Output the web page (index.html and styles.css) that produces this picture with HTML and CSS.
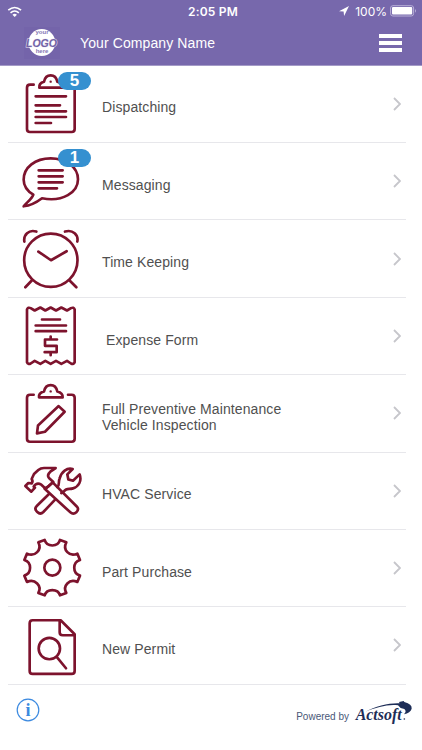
FILE: index.html
```html
<!DOCTYPE html>
<html lang="en">
<head>
<meta charset="utf-8">
<title>Your Company Name</title>
<link rel="stylesheet" href="styles.css">
</head>
<body>
<header class="header">
  <div class="status">
    <svg class="wifi" viewBox="20 16 50 38"><g fill="none" stroke="#fff" stroke-width="5"><path d="M24 31Q44 14 64 31"/><path d="M31 39Q44 28 57 39"/></g><path d="M37 45Q44 39 51 45L44 52Z" fill="#fff"/></svg>
    <span class="time">2:05 PM</span>
    <div class="power">
      <svg class="arrow" viewBox="0 0 10 10"><path d="M10 0L0 5.3L4.6 5.5L5.1 10Z" fill="#fff"/></svg>
      <span class="percent">100%</span>
      <svg class="battery" viewBox="0 0 27 12"><rect x=".6" y=".7" width="23" height="10.3" rx="2.3" fill="none" stroke="#b9b0d8"/><rect x="2" y="2.1" width="20.2" height="7.5" rx="1" fill="#fff"/><path d="M25 4Q27 5.800 25 7.700Z" fill="#b9b0d8"/></svg>
    </div>
  </div>
  <div class="bar">
    <svg class="logo" viewBox="0 0 36 32"><rect width="36" height="32" fill="#7464aa"/><circle cx="17.800" cy="15.500" r="13.400" fill="#fff"/><g text-anchor="middle"><text class="logo-small" x="18" y="7.200">your</text><text class="logo-big" x="17.500" y="19.500" textLength="31" lengthAdjust="spacingAndGlyphs">LOGO</text><text class="logo-small" x="18" y="26.300">here</text></g></svg>
    <h1 class="company">Your Company Name</h1>
    <div class="menu"><i></i><i></i><i></i></div>
  </div>
</header>
<main class="list">
  <div class="row">
    <svg class="icon" viewBox="24 3.9 252 232"><path d="M101 63H90Q81 63 81 72V196Q81 205 90 205H215Q224 205 224 196V72Q224 63 215 63H205"/><path d="M118 72Q116 58 132 54Q136 35 152 35Q168 35 172 54Q188 58 188 72Z"/><circle class="dot" cx="152" cy="54" r="3.5"/><path d="M107 98H198M107 125H180M107 143H198M107 160H198M107 178H153"/></svg>
    <span class="badge">5</span><span class="label">Dispatching</span>
    <svg class="chevron" viewBox="0 0 8 14"><path d="M1 1L7 7L1 13"/></svg>
  </div>
  <div class="row">
    <svg class="icon" viewBox="24 2.1 252 232"><path d="M100 160C82 149 71 133 71 115C71 78 106 51 152 51C198 51 234 78 234 114C234 153 189 183 126 171C109 184 91 193 71 195C82 182 97 171 100 160Z"/><path d="M116 87H188M116 105H188M116 123H188M116 141H171"/></svg>
    <span class="badge">1</span><span class="label">Messaging</span>
    <svg class="chevron" viewBox="0 0 8 14"><path d="M1 1L7 7L1 13"/></svg>
  </div>
  <div class="row">
    <svg class="icon" viewBox="24 .3 252 232"><circle cx="152.500" cy="121" r="80"/><path d="M115 95L153 121L200 94M73 65C70 45 86 28 109 35M232 65C236 45 219 28 195 35M96 181L76 202M208 181L229 202"/></svg>
    <span class="label">Time Keeping</span>
    <svg class="chevron" viewBox="0 0 8 14"><path d="M1 1L7 7L1 13"/></svg>
  </div>
  <div class="row">
    <svg class="icon" viewBox="24 -1.5 252 232"><path d="M81 36Q84 28 92 32L104 39L121 30L136 39L152 30L168 39L184 30L201 39L213 32Q221 28 224 36V194Q221 202 213 198L201 190L184 199L168 190L152 199L136 190L121 199L104 190L92 198Q84 202 81 194Z"/><path d="M126 66H180M107 84H198M107 101H198M171 126H135V145H170V164H134M152 117V126M152 164V173"/></svg>
    <span class="label label-inset">Expense Form</span>
    <svg class="chevron" viewBox="0 0 8 14"><path d="M1 1L7 7L1 13"/></svg>
  </div>
  <div class="row">
    <svg class="icon" viewBox="24 -.3 252 232"><path d="M101 59H90Q81 59 81 68V191Q81 200 90 200H215Q224 200 224 191V68Q224 59 215 59H204"/><path d="M117 67Q115 53 132 49Q136 30 152 30Q168 30 172 49Q189 53 188 67Z"/><circle class="dot" cx="152" cy="49" r="3.5"/><path d="M176 93L194 110L135 170L111 175L114 151Z"/></svg>
    <span class="label">Full Preventive Maintenance<br>Vehicle Inspection</span>
    <svg class="chevron" viewBox="0 0 8 14"><path d="M1 1L7 7L1 13"/></svg>
  </div>
  <div class="row">
    <svg class="icon" viewBox="24 .9 252 232"><path d="M102 67L115 55Q122 49 132 49H167L151 60Q140 70 147 79L160 91L137 111L124 99Q110 91 101 105L105 108L94 120L76 103L85 94L95 95Q100 88 95 82Z"/><path d="M146 103L158 92L231 165Q238 173 229 182Q220 190 211 182L134 111Z"/><path d="M172 106C180 100 174 91 179 80C184 60 201 47 218 52L202 68L205 83L219 87L239 68C246 88 236 105 219 110C207 114 200 107 192 119L184 124M166 143L130 181Q121 190 112 181L110 179Q102 171 111 162L147 127"/></svg>
    <span class="label">HVAC Service</span>
    <svg class="chevron" viewBox="0 0 8 14"><path d="M1 1L7 7L1 13"/></svg>
  </div>
  <div class="row">
    <svg class="icon" viewBox="24 -.9 252 232"><path d="M115 39L134 32C140 54 174 54 180 32L199 39C187 61 208 84 232 73L240 92C217 99 217 132 240 139L232 158C208 147 187 170 199 191L180 198C174 177 140 177 134 198L115 191C127 170 105 147 81 158L73 139C96 132 96 99 73 92L81 73C105 84 127 61 115 39Z"/><circle cx="157" cy="115" r="24"/></svg>
    <span class="label">Part Purchase</span>
    <svg class="chevron" viewBox="0 0 8 14"><path d="M1 1L7 7L1 13"/></svg>
  </div>
  <div class="row">
    <svg class="icon" viewBox="24 .3 252 232"><path d="M182 40H98Q89 40 89 49V192Q89 201 98 201H215Q224 201 224 192V82ZM179 42V76Q179 85 188 85H223"/><circle cx="148" cy="125" r="32"/><path d="M170 150L198 184"/></svg>
    <span class="label">New Permit</span>
    <svg class="chevron" viewBox="0 0 8 14"><path d="M1 1L7 7L1 13"/></svg>
  </div>
</main>
<footer class="footer">
  <svg class="info" viewBox="0 0 24 24"><circle cx="12" cy="12" r="10.800"/><text x="12" y="18">i</text></svg>
  <span class="powered">Powered by</span>
  <svg class="actsoft" viewBox="222 236 180 78"><text x="227" y="299" textLength="138" lengthAdjust="spacingAndGlyphs">Actsoft</text><path d="M256 274C286 258 331 247 359 249L357 245L371 242L373 245Q397 251 395 265Q391 278 372 282Q381 273 373 266L362 263L354 255C324 251 290 261 256 274Z"/><circle cx="373" cy="296" r="2.500"/></svg>
</footer>
</body>
</html>
```
FILE: styles.css
```css
* { box-sizing: border-box; }
body {
  margin: 0;
  width: 422px;
  height: 750px;
  overflow: hidden;
  background: #fff;
  color: #505050;
  font-family: "Liberation Sans", Arial, sans-serif;
}
svg { display: block; flex: none; }
.header {
  height: 65.55px;
  background: #7768ac;
  border-bottom: 1px solid #a49bc7;
  color: #fff;
}
.status {
  display: grid;
  grid-template-columns: 1fr auto 1fr;
  align-items: center;
  height: 22px;
  padding: 0 5px 0 7px;
}
.wifi { width: 16px; height: 13px; }
.time { margin-left: 2px; font: 600 12px Inter, sans-serif; letter-spacing: 0.2px; }
.power { display: flex; align-items: center; justify-content: flex-end; }
.arrow { width: 10px; height: 10px; margin-right: 6px; }
.percent { font: 12px Inter, sans-serif; margin-right: 3px; }
.battery { width: 27px; height: 12px; }
.bar { display: flex; align-items: center; height: 42px; padding: 0 20px 0 24px; }
.logo { width: 36px; height: 32px; overflow: visible; }
.logo-small { font: bold 6px "Liberation Sans", sans-serif; fill: #8577b5; }
.logo-big { font: italic bold 11px "Liberation Sans", sans-serif; fill: #7264a6; stroke: #eeeaf7; stroke-width: 1px; paint-order: stroke; }
.company { margin: 0 auto 0 20px; font-size: 14px; font-weight: 400; letter-spacing: 0.1px; }
.menu { display: grid; gap: 3px; width: 23px; }
.menu i { height: 4.3px; background: #fff; }
.list { display: grid; grid-auto-rows: 77.4px; padding: 0 16px 0 8px; }
.row {
  position: relative;
  display: flex;
  align-items: center;
  padding-right: 5px;
  border-bottom: 1px solid #e7e7eb;
}
.icon {
  width: 84px;
  height: 77.33px;
  fill: none;
  stroke: #7d132d;
  stroke-width: 8;
  stroke-linecap: round;
  stroke-linejoin: round;
}
.icon .dot { fill: #7d132d; stroke: none; }
.badge {
  position: absolute;
  left: 50px;
  top: 6.5px;
  width: 33px;
  height: 18px;
  border-radius: 9px;
  background: #3590d0;
  color: #fff;
  font-size: 17px;
  font-weight: 700;
  line-height: 18px;
  text-align: center;
}
.label { margin: 8px auto 0 10px; font-size: 14px; line-height: 16.5px; letter-spacing: 0.1px; }
.label-inset { margin-left: 14px; }
.chevron { width: 8px; height: 14px; fill: none; stroke: #c6c6cb; stroke-width: 1.8; }
.footer { display: flex; height: 65px; padding: 0 8px 0 16px; }
.info { width: 24px; height: 24px; margin: 13px auto 0 0; fill: none; stroke: #3c8ae0; stroke-width: 1.2; }
.info text { font: bold 18px "Liberation Serif", serif; text-anchor: middle; fill: #3c8ae0; stroke: none; }
.powered { margin: 25px 5px 0 0; color: #4a5878; font-size: 10px; line-height: 13px; }
.actsoft { width: 60px; height: 26px; margin-top: 14px; fill: #1d2d57; }
.actsoft text { font: italic bold 52px "Liberation Serif", serif; }
```
